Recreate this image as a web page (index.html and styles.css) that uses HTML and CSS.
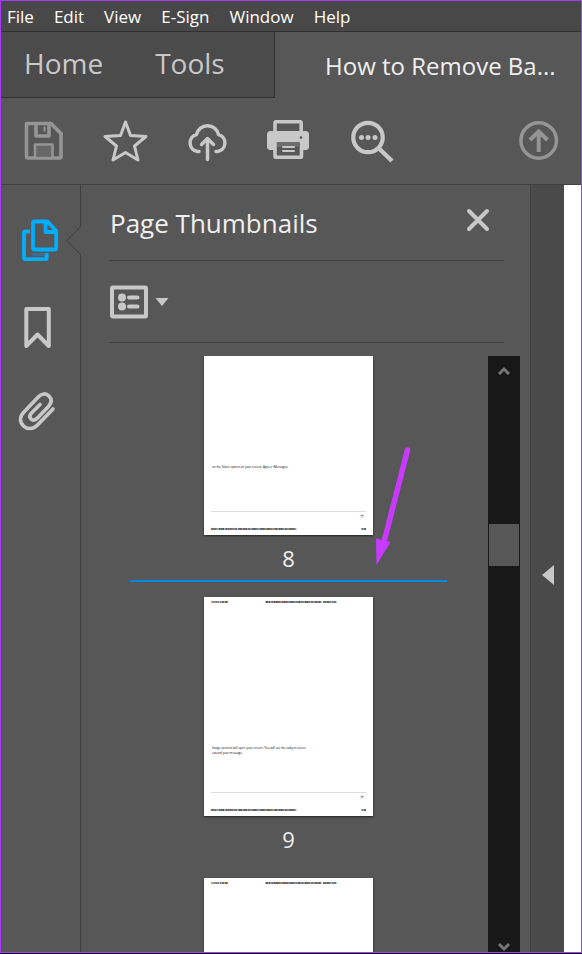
FILE: index.html
```html
<!DOCTYPE html>
<html lang="en">
<head>
  <meta charset="UTF-8" />
  <meta name="viewport" content="width=device-width, initial-scale=1" />
  <title>How to Remove Background</title>
  <link rel="stylesheet" href="styles.css">
</head>
<body>

<div class="window">
  <nav class="menubar">
    <button>File</button>
    <button>Edit</button>
    <button>View</button>
    <button>E-Sign</button>
    <button>Window</button>
    <button>Help</button>
  </nav>

  <div class="tabs">
    <div class="main-tabs">
      <button>Home</button>
      <button>Tools</button>
    </div>
    <button class="doc-tab">How to Remove Ba...</button>
  </div>

  <div class="toolbar">
    <button class="icon dim" aria-label="Save">
      <svg viewBox="0 0 44 44" fill="none" stroke="currentColor" stroke-width="3.6" stroke-linejoin="round">
        <path d="M5.5 4.5h24.500l10 10v23a1.500 1.500 0 0 1-1.500 1.500H7a1.500 1.500 0 0 1-1.500-1.500z" />
        <path d="M15 4.500v12.500h13V4.500" />
        <path d="M23.500 7.500v5" stroke-width="2" />
        <path d="M14 39V25.500h17.500V39z" fill="#686868" stroke-width="2.500" />
      </svg>
    </button>
    <button class="icon" aria-label="Star">
      <svg viewBox="0 0 44 44" fill="none" stroke="currentColor" stroke-width="3" stroke-linejoin="round">
        <path d="M22.500 3L27.500 16.500L43 17.500L31.500 27L35 41L22.500 33.500L10 41L13.500 27L2 17.500L17.500 16.500z" />
      </svg>
    </button>
    <button class="icon" aria-label="Upload to cloud">
      <svg viewBox="0 0 44 44" fill="none" stroke="currentColor" stroke-width="3.5" stroke-linecap="round" stroke-linejoin="round">
        <path d="M14 32.500H12.500A8.700 8.700 0 0 1 11.500 15.500A11.300 11.300 0 0 1 33.500 15.500A8.700 8.700 0 0 1 32.500 32.500H31" />
        <path d="M22.500 40.500V19.500M16.500 25.500L22.500 19.500L28.500 25.500" />
      </svg>
    </button>
    <button class="icon" aria-label="Print">
      <svg viewBox="0 0 44 44" fill="none" stroke="currentColor">
        <path d="M8 14V4q0-1.200 1.200-1.200H33q1.200 0 1.200 1.200V14" stroke-width="3.500" />
        <rect x="0" y="12" width="42" height="19" rx="3.500" fill="currentColor" stroke="none" />
        <rect x="8" y="21.500" width="26.500" height="16.700" rx="1" fill="#575757" stroke-width="3.600" />
        <path d="M10 25.500h22.500" stroke="#6d6d6d" stroke-width="4.500" />
        <path d="M16 28h11M16 32h11" stroke-width="2" stroke-linecap="round" />
        <circle cx="34" cy="18.500" r="1.300" fill="#575757" stroke="none" />
      </svg>
    </button>
    <button class="icon" aria-label="Find">
      <svg viewBox="0 0 44 44" fill="none" stroke="currentColor">
        <circle cx="19" cy="18.500" r="14.700" stroke-width="4.200" />
        <path d="M30 29.500L43 42" stroke-width="4.500" />
        <g fill="currentColor" stroke="none">
          <circle cx="12.500" cy="18.500" r="2.500" />
          <circle cx="19" cy="18.500" r="2.500" />
          <circle cx="26" cy="18.500" r="2.500" />
        </g>
      </svg>
    </button>
    <button class="icon dim share" aria-label="Share">
      <svg viewBox="0 0 44 44" fill="none" stroke="currentColor" stroke-width="3.500">
        <circle cx="21.700" cy="21.500" r="17.800" />
        <path d="M21.700 33V13M13 21L21.700 12.500L30.500 21" stroke-width="4" />
      </svg>
    </button>
  </div>

  <div class="workspace">
    <aside class="rail">
      <button class="icon active" aria-label="Page thumbnails">
        <svg viewBox="0 0 44 44" fill="none" stroke="currentColor" stroke-width="3.800" stroke-linejoin="round">
          <path d="M12 13.500H7.200q-1.200 0-1.200 1.200V40q0 1.200 1.200 1.200H27.500q1.200 0 1.200-1.200V35" />
          <path d="M14 35h13v3H14z" fill="#3b6e8c" stroke="none" />
          <path d="M16.500 3.500H29.500L38.200 13V30q0 1.500-1.500 1.500H16.500q-1.500 0-1.500-1.500V5q0-1.500 1.500-1.500z" />
          <path d="M27.500 4V14H38" />
        </svg>
        <svg class="notch" viewBox="0 0 15 29"><path d="M15 0L1 14.500L15 29" fill="#575757" stroke="#404040" /></svg>
      </button>
      <button class="icon" aria-label="Bookmarks">
        <svg viewBox="0 0 44 44" fill="none" stroke="currentColor" stroke-width="4" stroke-linejoin="round">
          <path d="M8.300 4H30.800V41L19.500 29.500L8.300 41z" />
        </svg>
      </button>
      <button class="icon" aria-label="Attachments">
        <svg viewBox="0 0 44 44" fill="none" stroke="currentColor" stroke-width="3.700" stroke-linecap="round">
          <path d="M35 18L19.500 34C15 38.500 9 38.500 5.500 35C1.500 31 1.500 25.500 6 21L20 6.200C23.500 2.200 28 2 31 5C34 8 33.500 12 30.500 15.500L19 27.500C17 29.500 14.500 29.500 13 28C11.300 26.300 11.500 24 13.500 22L22 13.500" transform="translate(0 -1)" />
        </svg>
      </button>
    </aside>

    <section class="panel">
      <div class="panel-head">
        <h1>Page Thumbnails</h1>
        <button class="close" aria-label="Close">
          <svg viewBox="0 0 24 24" fill="none" stroke="currentColor" stroke-width="4" stroke-linecap="round">
            <path d="M3 3L21 21M21 3L3 21" />
          </svg>
        </button>
      </div>
      <div class="panel-options">
        <button class="options" aria-label="Options">
          <svg viewBox="0 0 60 34" fill="none" stroke="currentColor">
            <rect x="3" y="2.500" width="34" height="29" rx="1" stroke-width="4" />
            <path d="M20 12.500h8.500M20 21.500h8.500" stroke-width="4" stroke-linecap="round" />
            <g fill="currentColor" stroke="none">
              <circle cx="13" cy="12.500" r="4" />
              <circle cx="13" cy="21.500" r="4" />
              <path d="M46.500 13h13L53 21z" />
            </g>
          </svg>
        </button>
      </div>

      <div class="panel-body">
        <ol class="thumbs">
          <li class="drop-after">
            <div class="page clipped">
              <p>on the Share option on your screen. App or iMessages.</p>
              <div class="foot">
                <i>x</i>
                <div><span>https://www.guidingtech.com/how-to-remove-background-from-image-on-iphone/</span><span>8/20</span></div>
              </div>
            </div>
            <span class="number">8</span>
          </li>
          <li>
            <div class="page">
              <div class="running"><span>11/6/23, 3:46 PM</span><b>How to Remove Background From an Image on iPhone - Guiding Tech</b></div>
              <p>Image protrait will open your screen. You will see the subject select<br>extend your message.</p>
              <div class="foot">
                <i>x</i>
                <div><span>https://www.guidingtech.com/how-to-remove-background-from-image-on-iphone/</span><span>9/20</span></div>
              </div>
            </div>
            <span class="number">9</span>
          </li>
          <li>
            <div class="page">
              <div class="running"><span>11/6/23, 3:46 PM</span><b>How to Remove Background From an Image on iPhone - Guiding Tech</b></div>
            </div>
          </li>
        </ol>

        <div class="scrollbar">
          <button aria-label="Scroll up"><svg viewBox="0 0 12 10" fill="none" stroke="#777" stroke-width="3"><path d="M1 8L6 3L11 8" /></svg></button>
          <div class="scroll-thumb"></div>
          <button class="down" aria-label="Scroll down"><svg viewBox="0 0 12 10" fill="none" stroke="#777" stroke-width="3"><path d="M1 2L6 7L11 2" /></svg></button>
        </div>

        <!-- arrow pointing at the drop line -->
        <svg class="pointer" viewBox="0 0 40 120" fill="#c93aff">
          <path d="M34.500 4L11 96" stroke="#c93aff" stroke-width="5.500" stroke-linecap="round" />
          <path d="M3 92.500L17.500 96L3.500 119z" />
        </svg>
      </div>
    </section>

    <button class="collapse" aria-label="Collapse panel">
      <svg viewBox="0 0 12 20"><path d="M12 0V20L0 10z" fill="currentColor" /></svg>
    </button>
    <main class="document"></main>
  </div>
</div>

</body>
</html>
```
FILE: styles.css
```css
* {
  box-sizing: border-box;
}

body {
  margin: 0;
  height: 100vh;
  padding-bottom: 1px;
  background: #000;
  font-family: "Open Sans", "Noto Sans", sans-serif;
  color: #f0f0f0;
}

button {
  padding: 0;
  border: none;
  background: none;
  font: inherit;
  color: inherit;
  cursor: pointer;
}

svg {
  display: block;
}

.window {
  display: flex;
  flex-direction: column;
  height: 100%;
  border: 1px solid #a63cff;
  background: #575757;
  overflow: hidden;
}

.menubar {
  display: flex;
  gap: 20px;
  height: 31px;
  padding: 0 6px;
  border-bottom: 1px solid #303030;
  background: #484848;
  font-size: 17px;
  color: #fff;
}

.tabs {
  display: flex;
  height: 66px;
}

.main-tabs {
  display: flex;
  gap: 52px;
  width: 274px;
  padding: 0 0 4px 23px;
  border-right: 1px solid #303030;
  border-bottom: 1px solid #303030;
  background: #4b4b4b;
  font-size: 28px;
  color: #c8c8c8;
}

.doc-tab {
  flex: 1;
  padding-left: 50px;
  font-size: 24px;
  text-align: left;
  white-space: nowrap;
}

.toolbar {
  display: flex;
  align-items: center;
  gap: 38px;
  height: 87px;
  padding: 0 20px;
  border-bottom: 1px solid #404040;
}

.icon {
  position: relative;
  flex: none;
  width: 44px;
  height: 44px;
  color: #c8c8c8;
}

.icon svg {
  overflow: visible;
}

.dim {
  color: #959595;
}

.share {
  margin-left: auto;
}

.workspace {
  display: flex;
  flex: 1;
  min-height: 0;
}

.rail {
  display: flex;
  flex-direction: column;
  gap: 43px;
  width: 80px;
  padding: 33px 0 0 17px;
  border-right: 1px solid #404040;
}

.active {
  color: #00adff;
}

.notch {
  position: absolute;
  top: 8px;
  left: 48px;
  width: 15px;
  height: 29px;
}

.panel {
  display: flex;
  flex: 1;
  flex-direction: column;
  min-width: 0;
}

.panel-head,
.panel-options {
  display: flex;
  align-items: center;
  justify-content: space-between;
  margin: 0 26px 0 28px;
  border-bottom: 1px solid #404040;
}

.panel-head {
  height: 76px;
  padding: 0 14px 0 1px;
}

.panel-options {
  height: 82px;
}

h1 {
  margin: 0;
  font-size: 26px;
  font-weight: 400;
}

.close {
  width: 24px;
  height: 24px;
  margin-bottom: 5px;
  color: #c8c8c8;
}

.options {
  width: 60px;
  height: 34px;
  color: #c8c8c8;
}

.panel-body {
  position: relative;
  display: flex;
  flex: 1;
  min-height: 0;
  margin-top: 13px;
  padding: 0 10px 0 8px;
}

.thumbs {
  flex: 1;
  margin: 0;
  padding: 0;
  list-style: none;
  overflow: hidden;
}

.thumbs li {
  position: relative;
  display: flex;
  flex-direction: column;
  align-items: center;
  gap: 8px;
  margin-bottom: 24px;
}

.drop-after::after {
  content: "";
  position: absolute;
  bottom: -9px;
  width: 317px;
  height: 2px;
  background: #008ae6;
}

.page {
  display: flex;
  flex-direction: column;
  width: 169px;
  height: 219px;
  padding: 3px 7px 4px;
  background: #fff;
  box-shadow: 0 1px 2px #222;
  color: #000;
  font-size: 2px;
  line-height: 4px;
}

.running {
  display: flex;
  gap: 38px;
}

.running,
.foot {
  font-weight: 800;
  text-shadow: 0 1px #000;
}

.page p {
  margin: 142px 0 0 1px;
  font-size: 3px;
  line-height: 5px;
  white-space: nowrap;
}

/* only the lower part of this page is scrolled into view */
.clipped {
  height: 179px;
}

.clipped p {
  margin-top: 106px;
}

.foot {
  display: flex;
  flex-direction: column;
  justify-content: space-between;
  height: 20px;
  margin-top: auto;
  border-top: 1px solid #ddd;
}

.foot div {
  display: flex;
  justify-content: space-between;
}

.foot i {
  align-self: flex-end;
  width: 4px;
  height: 4px;
  margin: 2px 2px 0 0;
  border-radius: 2px;
  background: #ddd;
  text-align: center;
  text-shadow: none;
}

.number {
  font-size: 22px;
  line-height: 30px;
}

.scrollbar {
  display: flex;
  flex-direction: column;
  width: 32px;
  padding: 0 1px;
  background: #181818;
}

.scrollbar button {
  display: flex;
  align-items: center;
  justify-content: center;
  height: 30px;
}

.scrollbar svg {
  width: 12px;
  height: 10px;
}

.scroll-thumb {
  height: 42px;
  margin-top: 138px;
  background: #575757;
}

.scrollbar .down {
  height: 10px;
  margin-top: auto;
}

.pointer {
  position: absolute;
  top: 90px;
  right: 117px;
  width: 40px;
  height: 120px;
}

.collapse {
  display: flex;
  align-items: center;
  justify-content: center;
  width: 34px;
  padding-top: 12px;
  border-left: 1px solid #404040;
  background: #4a4a4a;
  color: #c8c8c8;
}

.collapse svg {
  width: 12px;
  height: 20px;
}

.document {
  width: 17px;
  background: #fff;
}
```
